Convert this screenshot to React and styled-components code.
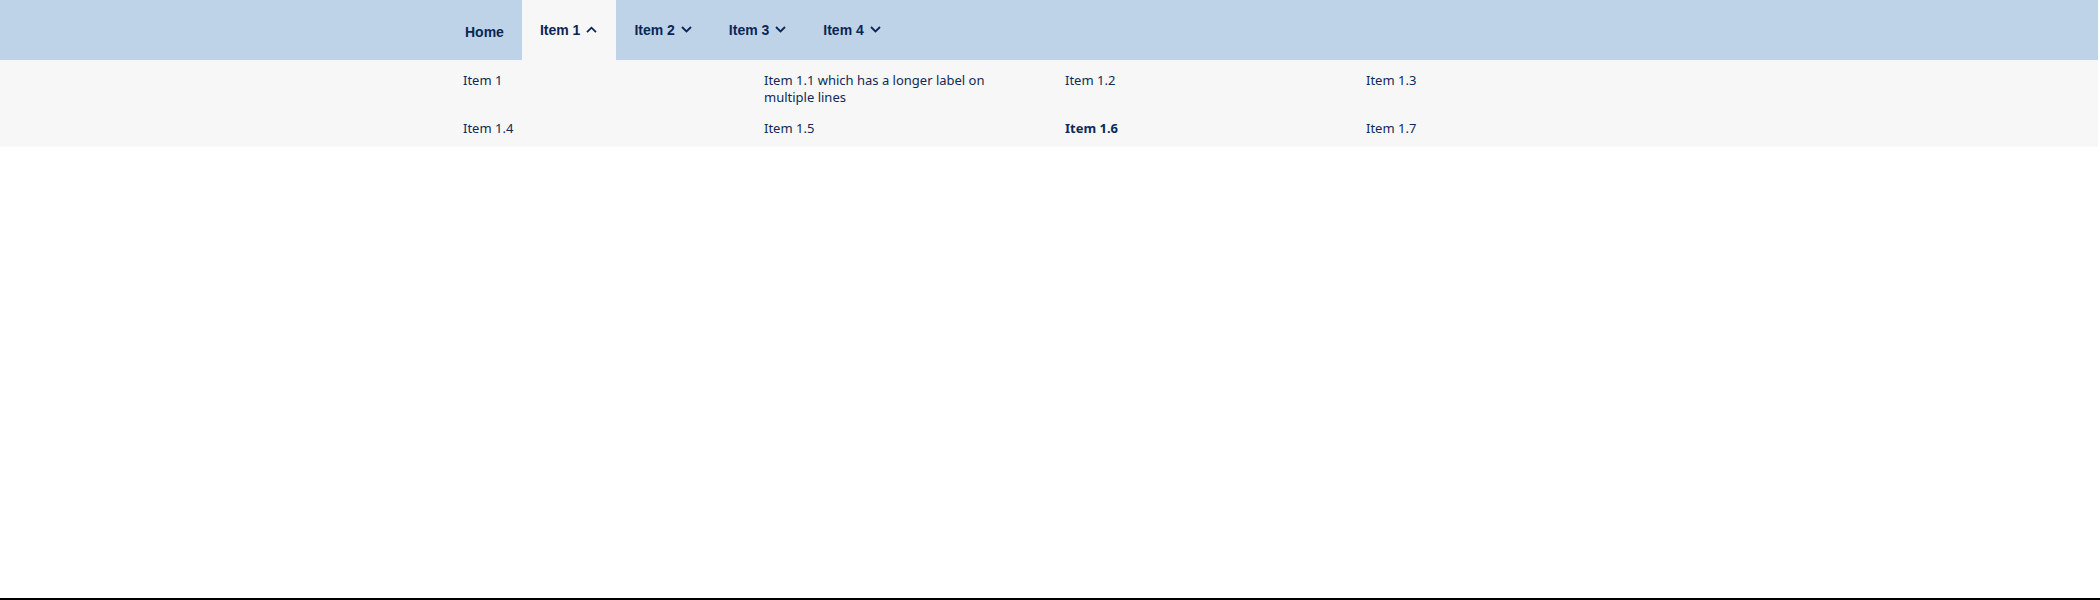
import styled, { createGlobalStyle } from "styled-components";

const GlobalStyle = createGlobalStyle`
  html, body {
    margin: 0;
    padding: 0;
    background: #ffffff;
  }
  body {
    font-family: "Liberation Sans", Arial, sans-serif;
  }
`;

const topItems = [
  { label: "Item 1", open: true },
  { label: "Item 2" },
  { label: "Item 3" },
  { label: "Item 4" },
];

const subItems = [
  { label: "Item 1" },
  { label: "Item 1.1 which has a longer label on multiple lines" },
  { label: "Item 1.2" },
  { label: "Item 1.3" },
  { label: "Item 1.4" },
  { label: "Item 1.5" },
  { label: "Item 1.6", current: true },
  { label: "Item 1.7" },
];

const Chevron = ({ up }) => (
  <svg width="11" height="7" viewBox="0 0 11 7" fill="none">
    <path
      d={up ? "M1 6.2 L5.5 1.7 L10 6.2" : "M1 1 L5.5 5.5 L10 1"}
      stroke="#0b2655"
      strokeWidth="1.8"
    />
  </svg>
);

const App = () => {
  return (
    <Page>
      <GlobalStyle />
      <Header>
        <NavBar>
          <HomeLink href="#">Home</HomeLink>
          {topItems.map((item) => (
            <TopButton key={item.label} open={item.open}>
              {item.label}
              <Chevron up={item.open} />
            </TopButton>
          ))}
        </NavBar>
        <SubMenu>
          <SubGrid>
            {subItems.map((item) => (
              <SubLink key={item.label} href="#" current={item.current}>
                {item.label}
              </SubLink>
            ))}
          </SubGrid>
        </SubMenu>
      </Header>
      <Spacer />
      <BottomLine />
    </Page>
  );
};

export default App;

const Page = styled.div`
  display: flex;
  flex-direction: column;
  height: 100vh;
`;

const Header = styled.header`
  width: calc(100% - 2px);
  background: #bed3e8;
`;

const NavBar = styled.nav`
  width: 1204px;
  margin: 0 auto;
  height: 60px;
  display: flex;
  align-items: stretch;
`;

const HomeLink = styled.a`
  display: flex;
  align-items: center;
  padding: 3px 18px 0;
  font-size: 14px;
  font-weight: 700;
  color: #0b2655;
  text-decoration: none;
`;

const TopButton = styled.button`
  display: flex;
  align-items: center;
  gap: 6px;
  padding: 0 19px 1px 18px;
  border: none;
  background: ${(props) => (props.open ? "#f7f7f7" : "transparent")};
  font-family: "Liberation Sans", Arial, sans-serif;
  font-size: 14px;
  font-weight: 700;
  color: #0b2655;
  cursor: pointer;
`;

const SubMenu = styled.div`
  background: #f7f7f7;
  padding: 12px 0 10px;
`;

const SubGrid = styled.div`
  width: 1204px;
  margin: 0 auto;
  padding-left: 16px;
  box-sizing: border-box;
  display: grid;
  grid-template-columns: repeat(4, 301px);
  row-gap: 14px;
`;

const SubLink = styled.a`
  max-width: 240px;
  font-family: "Noto Sans", "Open Sans", sans-serif;
  font-size: 13px;
  line-height: 17px;
  font-weight: ${(props) => (props.current ? 700 : 400)};
  color: #0d2a5a;
  text-decoration: none;
`;

const Spacer = styled.div`
  flex: 1;
`;

const BottomLine = styled.div`
  height: 2px;
  background: #000000;
`;
